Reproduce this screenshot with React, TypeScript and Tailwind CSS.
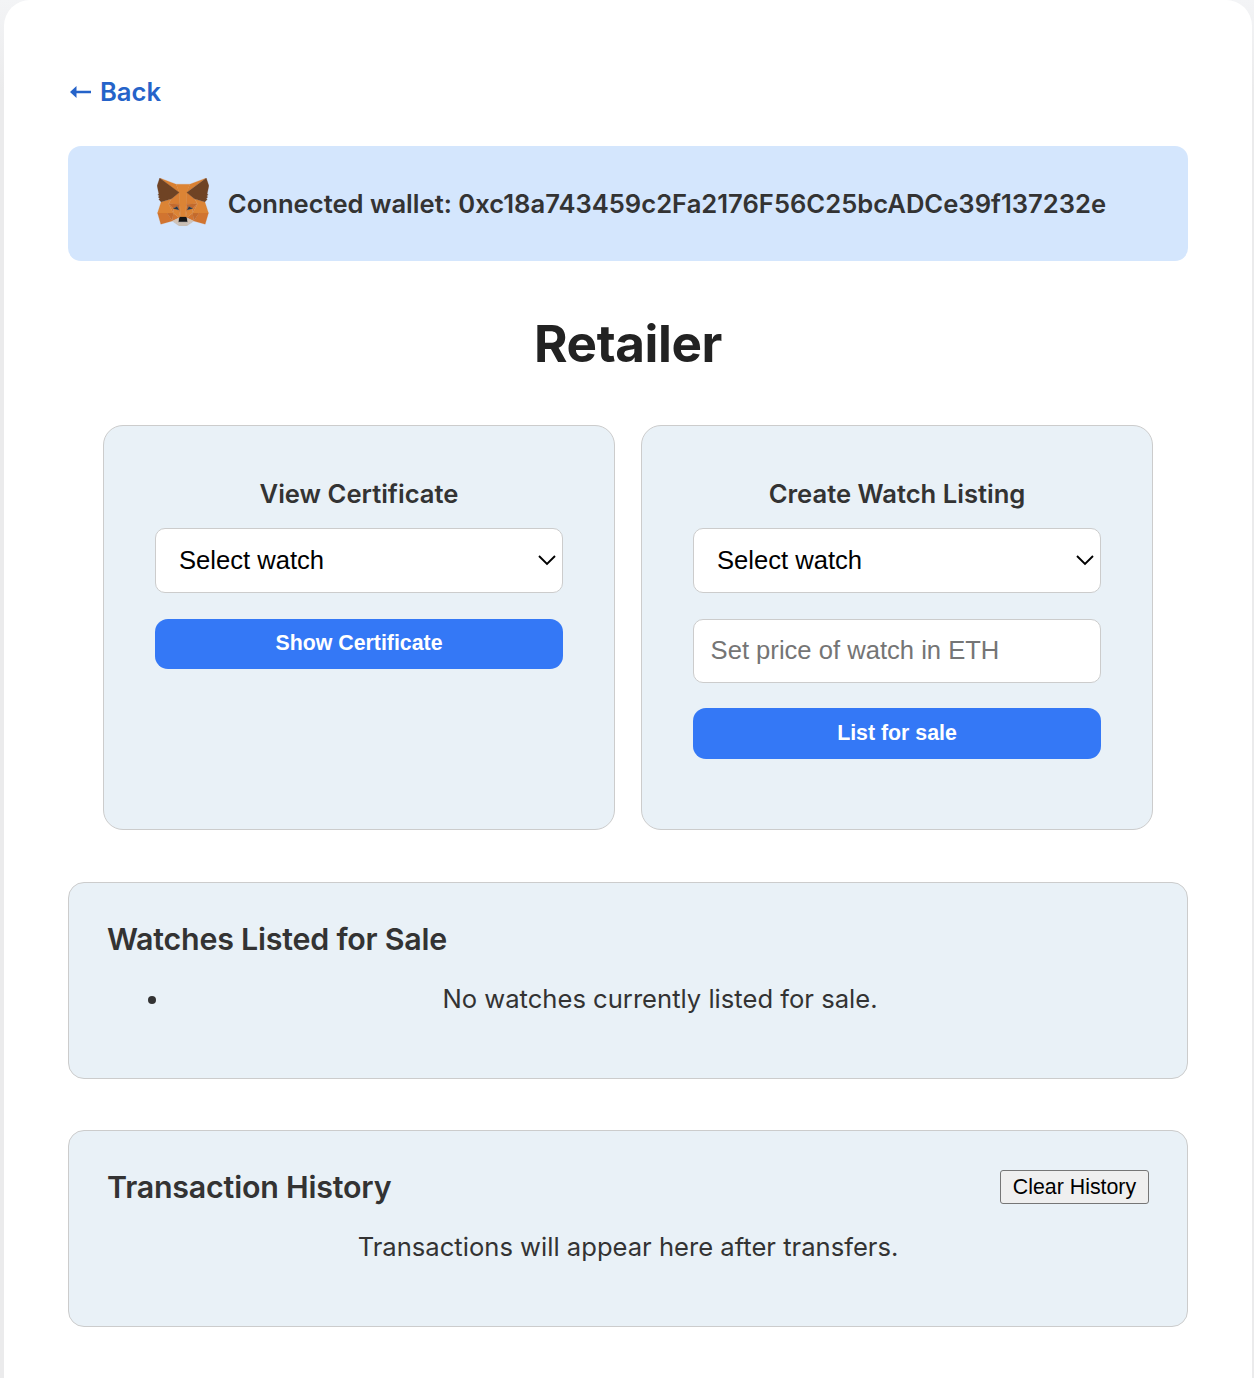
import React from "react";

const fox: [string, string[]][] = [
  ["#d98032", ["274.1,35.5 174.6,109.4 193,65.8", "44.4,35.5 143.1,110.1 125.6,65.8"]],
  ["#d17430", [
    "238.3,206.8 211.8,247.4 268.5,263 284.8,207.7",
    "33.9,207.7 50.1,263 106.8,247.4 80.3,206.8",
    "106.8,247.4 140.6,230.9 111.4,208.1",
    "177.9,230.9 211.8,247.4 207.1,208.1",
  ]],
  ["#d87e33", [
    "103.6,138.2 87.8,162.1 144.1,164.6 142.1,104.1",
    "214.9,138.2 175.9,103.4 174.6,164.6 230.8,162.1",
  ]],
  ["#d3c2b4", ["211.8,247.4 177.9,230.9 180.6,253 180.3,262.3", "106.8,247.4 138.3,262.3 138.1,253 140.6,230.9"]],
  ["#c36a2d", [
    "106.8,247.4 111.6,206.8 80.3,207.7",
    "207,206.8 211.8,247.4 238.3,207.7",
    "230.8,162.1 174.6,164.6 179.8,193.5 188.1,176.1 208.1,185.2",
    "110.6,185.2 130.6,176.1 138.8,193.5 144.1,164.6 87.8,162.1",
  ]],
  ["#d57831", [
    "87.8,162.1 111.4,208.1 110.6,185.2",
    "208.1,185.2 207.1,208.1 230.8,162.1",
    "144.1,164.6 138.8,193.5 145.4,227.6 146.9,182.7",
    "174.6,164.6 171.9,182.6 173.1,227.6 179.8,193.5",
  ]],
  ["#dc8435", [
    "179.8,193.5 173.1,227.6 177.9,230.9 207.1,208.1 208.1,185.2",
    "110.6,185.2 111.4,208.1 140.6,230.9 145.4,227.6 138.8,193.5",
  ]],
  ["#273545", ["138.8,193.5 110.6,185.2 130.5,176.1", "179.7,193.5 188,176.1 208,185.2"]],
  ["#c9bfb5", ["180.3,262.3 180.6,253 178.1,250.8 140.4,250.8 138.1,253 138.3,262.3 106.8,247.4 117.8,256.4 140.1,271.9 178.4,271.9 200.8,256.4 211.8,247.4"]],
  ["#dc8435", [
    "267.2,153.5 214.9,138.2 230.8,162.1 207.1,208.1 238.3,207.7 284.8,207.7",
    "103.6,138.2 51.3,153.5 33.9,207.7 80.3,207.7 111.4,208.1 87.8,162.1",
    "174.6,164.6 177.9,106.9 193.1,65.8 125.6,65.8 140.6,106.9 144.1,164.6 145.3,182.8 145.4,227.6 173.1,227.6 173.3,182.8",
  ]],
  ["#161616", ["177.9,230.9 173.1,227.6 145.4,227.6 140.6,230.9 138.1,253 140.4,250.8 178.1,250.8 180.6,253"]],
  ["#6f4324", [
    "278.3,114.2 286.8,73.4 274.1,35.5 177.9,106.9 214.9,138.2 267.2,153.5 278.8,140 273.8,136.4 281.8,129.1 275.6,124.3 283.6,118.2",
    "31.8,73.4 40.3,114.2 34.9,118.2 42.9,124.3 36.8,129.1 44.8,136.4 39.8,140 51.3,153.5 103.6,138.2 140.6,106.9 44.4,35.5",
  ]],
];

function FoxLogo() {
  return (
    <svg viewBox="31.8 35.5 255 236.4" className="mb-[3px] ml-[7px] h-12 w-[52px] shrink-0">
      {fox.map(([color, shapes]) =>
        shapes.map((points) => (
          <polygon key={points} points={points} fill={color} stroke={color} strokeWidth="1" strokeLinejoin="round" />
        )),
      )}
    </svg>
  );
}

function SelectBox() {
  return (
    <button className="flex h-[65px] w-full items-center justify-between rounded-[10px] border border-[#ccc] bg-white pr-[6px] pl-[23px] text-[25.6px] text-black">
      <span>Select watch</span>
      <svg viewBox="0 0 18 12" className="mb-px h-3 w-[18px]" fill="none" stroke="black" strokeWidth="1.9">
        <path d="M1 2 L9 10 L17 2" />
      </svg>
    </button>
  );
}

function PrimaryButton({ className, children }: { className: string; children: React.ReactNode }) {
  return (
    <button className={`w-full rounded-[13px] bg-[#3478f6] pb-[2px] text-[21.33px] leading-6 font-bold text-white ${className}`}>
      {children}
    </button>
  );
}

function ActionCard({ title, children }: { title: string; children: React.ReactNode }) {
  return (
    <section className="h-[405px] w-[512px] rounded-[20px] border border-[#ccc] bg-[#e9f1f7] px-[51px] pt-[49px]">
      <h2 className="mb-4 text-center text-[25.6px] leading-[37px] font-semibold">{title}</h2>
      <div className="flex flex-col font-['Liberation_Sans',Arial,sans-serif]">{children}</div>
    </section>
  );
}

export default function App() {
  return (
    <div className="h-[1378px] overflow-hidden bg-[linear-gradient(#f3f4f6,#ebebec_90px)] pr-[2px] pl-1 font-[Inter,sans-serif] text-[#333]">
      <main className="h-[1420px] rounded-t-[26px] bg-white px-16 pt-[72px]">
        <a href="#" className="flex h-10 items-center text-[25.6px] leading-10 font-semibold text-[#2563c9]">
          <svg viewBox="0 0 21 12" className="mr-[9px] ml-[2px] h-3 w-[21px]" fill="currentColor">
            <path d="M0 6 L6.5 0 V4.7 H21 V7.3 H6.5 V12 Z" />
          </svg>
          Back
        </a>

        <div className="mt-[34px] flex h-[115px] items-center justify-center gap-[19px] rounded-[13px] bg-[#d4e6fd]">
          <FoxLogo />
          <p className="pt-[2px] text-[25.6px] font-semibold whitespace-nowrap">
            Connected wallet: 0xc18a743459c2Fa2176F56C25bcADCe39f137232e
          </p>
        </div>

        <h1 className="mt-[49px] text-center text-[51.2px] leading-[66px] font-bold tracking-[-0.4px] text-[#222]">Retailer</h1>

        <div className="mt-[49px] flex justify-center gap-[26px]">
          <ActionCard title="View Certificate">
            <SelectBox />
            <div className="mt-[26px] flex">
              <PrimaryButton className="h-[50px]">Show Certificate</PrimaryButton>
            </div>
          </ActionCard>
          <ActionCard title="Create Watch Listing">
            <SelectBox />
            <input
              className="mt-[26px] h-16 w-full rounded-[10px] border border-[#ccc] bg-white pr-4 pb-[2px] pl-[16.6px] text-[25.6px] placeholder:text-[#757575]"
              placeholder="Set price of watch in ETH"
            />
            <div className="mt-[25px] flex">
              <PrimaryButton className="h-[51px]">List for sale</PrimaryButton>
            </div>
          </ActionCard>
        </div>

        <section className="mt-[52px] h-[197px] rounded-[16px] border border-[#ccc] bg-[#e9f1f7] px-[38px] pt-9">
          <h2 className="text-[30.4px] leading-10 font-semibold tracking-[-0.22px]">Watches Listed for Sale</h2>
          <ul className="mt-5 list-disc pl-16 text-center text-[25.6px] leading-10">
            <li>No watches currently listed for sale.</li>
          </ul>
        </section>

        <section className="mt-[51px] h-[197px] rounded-[16px] border border-[#ccc] bg-[#e9f1f7] px-[38px] pt-9">
          <div className="flex items-center justify-between">
            <h2 className="text-[30.4px] leading-10 font-semibold tracking-[-0.2px]">Transaction History</h2>
            <button className="h-[34px] w-[149px] rounded-[3px] border border-[#767676] bg-[#efefef] font-['Liberation_Sans',Arial,sans-serif] text-[21.33px] leading-[30px] whitespace-nowrap text-black">
              Clear History
            </button>
          </div>
          <p className="mt-5 text-center text-[25.6px] leading-10">Transactions will appear here after transfers.</p>
        </section>
      </main>
    </div>
  );
}
